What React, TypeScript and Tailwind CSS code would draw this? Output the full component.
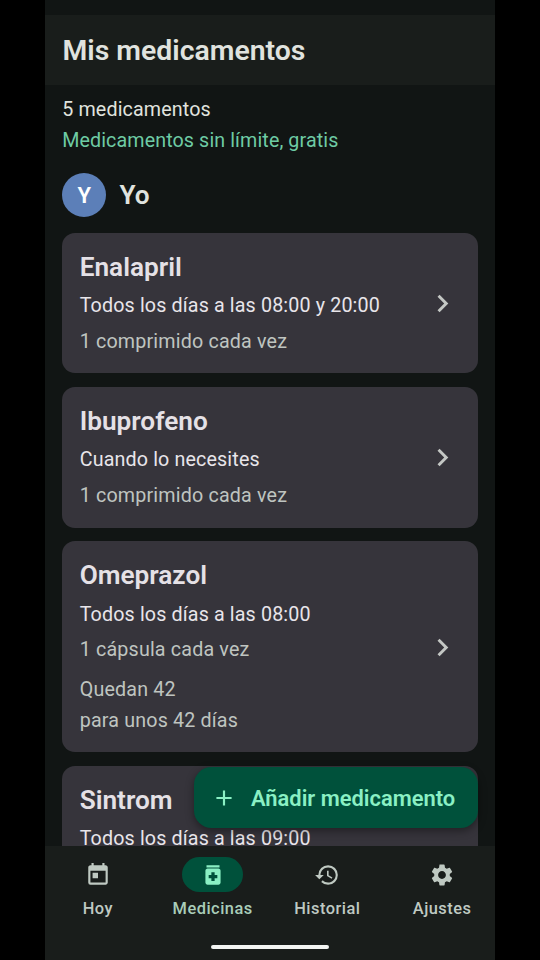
import { MdAdd, MdChevronRight, MdHistory, MdMedication, MdSettings, MdToday } from "react-icons/md";
import type { IconType } from "react-icons";

interface Medication {
  name: string;
  schedule: string;
  dose?: string;
  stock?: string[];
}

interface NavItem {
  label: string;
  icon: IconType;
  active?: boolean;
}

const medications: Medication[] = [
  { name: "Enalapril", schedule: "Todos los días a las 08:00 y 20:00", dose: "1 comprimido cada vez" },
  { name: "Ibuprofeno", schedule: "Cuando lo necesites", dose: "1 comprimido cada vez" },
  {
    name: "Omeprazol",
    schedule: "Todos los días a las 08:00",
    dose: "1 cápsula cada vez",
    stock: ["Quedan 42", "para unos 42 días"],
  },
  { name: "Sintrom", schedule: "Todos los días a las 09:00" },
];

const navItems: NavItem[] = [
  { label: "Hoy", icon: MdToday },
  { label: "Medicinas", icon: MdMedication, active: true },
  { label: "Historial", icon: MdHistory },
  { label: "Ajustes", icon: MdSettings },
];

function MedicationCard({ medication }: { medication: Medication }) {
  return (
    <div
      className={`flex shrink-0 rounded-[13px] bg-[#36343b] px-[17.5px] pt-[18.2px] pb-[16.8px] ${medication.dose ? "" : "min-h-[211px]"}`}
    >
      <div className="min-w-0 flex-1">
        <h3 className="text-[26.2px] leading-[33px] font-semibold text-[#e5e1e6]">{medication.name}</h3>
        <p className="mt-[6.2px] text-[19.7px] leading-[31px] tracking-[0.14px] whitespace-nowrap text-[#e8e5ea]">
          {medication.schedule}
        </p>
        {medication.dose && (
          <p className="mt-[4.5px] text-[19.7px] leading-[31px] tracking-[0.17px] text-[#bfc4c0]">
            {medication.dose}
          </p>
        )}
        {medication.stock && (
          <div className="mt-[8.5px] text-[19.7px] leading-[31px] tracking-[0.17px] text-[#bfc4c0]">
            {medication.stock.map((line) => (
              <p key={line}>{line}</p>
            ))}
          </div>
        )}
      </div>
      <MdChevronRight className="mr-[0.8px] -mt-px size-[35px] self-center text-[#c4c7c4]" />
    </div>
  );
}

export default function App() {
  return (
    <div className="h-[960px] w-[540px] overflow-hidden bg-black px-[45px] font-['Roboto',sans-serif]">
      <div className="relative flex h-full flex-col bg-[#111514] pt-[15px]">
        <header className="flex h-[70px] shrink-0 items-center bg-[#191d1b] px-[17.5px] pt-px">
          <h1 className="text-[28.4px] leading-[36px] font-semibold text-[#e0e3df]">Mis medicamentos</h1>
        </header>

        <main className="flex min-h-0 flex-1 flex-col overflow-hidden pr-[17px] pl-[17.2px] pt-[9px]">
          <p className="text-[19.7px] leading-[31px] tracking-[0.14px] text-[#e0e3df]">5 medicamentos</p>
          <p className="text-[19.7px] leading-[31px] tracking-[0.1px] text-[#6ecba4]">
            Medicamentos sin límite, gratis
          </p>

          <div className="mt-[17px] mb-[15.7px] flex shrink-0 items-center gap-[13.2px]">
            <div className="flex size-11 items-center justify-center rounded-full bg-[#5c7fb8] text-[22px] font-semibold text-white">
              Y
            </div>
            <h2 className="text-[26.2px] leading-[33px] font-semibold text-[#e0e3df]">Yo</h2>
          </div>

          <div className="flex flex-col gap-[13.6px]">
            {medications.map((medication) => (
              <MedicationCard key={medication.name} medication={medication} />
            ))}
          </div>
        </main>

        <button className="absolute right-[17px] bottom-[132px] flex h-[61px] w-[284px] items-center rounded-[17.5px] bg-[#00513b] pl-[17px] text-[#8af0c4] shadow-[0_3px_8px_rgba(0,0,0,0.4)]">
          <MdAdd className="size-[26px]" />
          <span className="ml-[14px] pt-[3px] text-[21.9px] font-semibold whitespace-nowrap">Añadir medicamento</span>
        </button>

        <nav className="flex h-[114px] shrink-0 flex-col items-center bg-[#191d1b]">
          <div className="grid w-full grid-cols-4 gap-x-[9px] pt-[11px]">
            {navItems.map(({ label, icon: Icon, active }) => (
              <div
                key={label}
                className={`flex flex-col items-center ${active ? "text-[#8af0c4]" : "text-[#bfc9c2]"}`}
              >
                <div
                  className={`flex h-[35px] w-[61px] items-center justify-center rounded-full ${active ? "bg-[#00513b]" : ""}`}
                >
                  <Icon className="size-[26px]" />
                </div>
                <span className={`mt-[5px] text-[16.4px] leading-6 font-medium tracking-[0.5px] ${active ? "text-[#a9cdb9]" : ""}`}>
                  {label}
                </span>
              </div>
            ))}
          </div>
          <div className="mt-6 h-1 w-[118px] rounded-full bg-[#f3f5f3]" />
        </nav>
      </div>
    </div>
  );
}
